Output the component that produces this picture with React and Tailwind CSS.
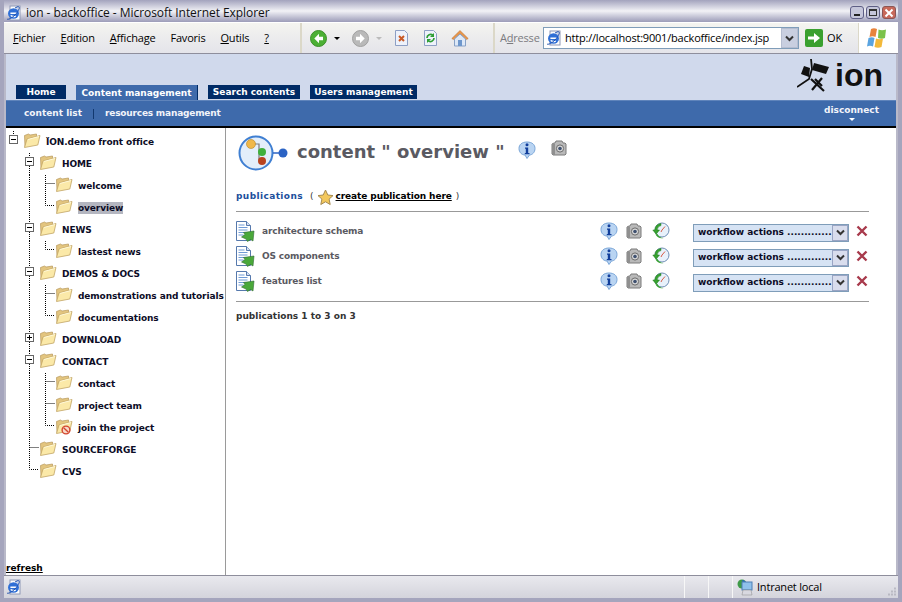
import React from "react";

const VERDANA = "font-['DejaVu_Sans',sans-serif]";
const TAHOMA = "font-['Open_Sans','Liberation_Sans',sans-serif]";

function IeIcon({ size = 16 }) {
  return (
    <svg width={size} height={size} viewBox="0 0 16 16" className="shrink-0">
      <rect x="4" y="1" width="10" height="14" fill="#fdfdfd" stroke="#8d97b5" />
      <path d="M10 1l4 4h-4z" fill="#cfd6ea" />
      <ellipse cx="7.5" cy="8.500" rx="5.500" ry="5.200" fill="#2f6fd6" />
      <path d="M4.400 8.200h6.200M4.800 10.400c1 1.400 3.600 1.400 4.800.4" stroke="#fff" strokeWidth="1.500" fill="none" />
      <path d="M1 14c1 1 5-1 8-4s5-7 4-8-3 .5-4 1" stroke="#1d4fae" strokeWidth="1" fill="none" />
    </svg>
  );
}

function RoundArrow({ color, edge, flip }) {
  return (
    <svg width="17" height="17" viewBox="0 0 17 17" className={flip ? "-scale-x-100" : ""}>
      <circle cx="8.5" cy="8.5" r="8" fill={color} stroke={edge} />
      <path d="M9 3.8L4.3 8.5 9 13.2V10.3h4V6.7H9z" fill="#fff" />
    </svg>
  );
}

function Folder({ badge }) {
  return (
    <svg width="18" height="18" viewBox="0 0 18 18" className="shrink-0">
      <path d="M1.500 4.500l4-1.500 1.500 1 6.500-1v3L2 16z" fill="#e3c57f" stroke="#b8985a" strokeWidth=".7" />
      <path d="M1.500 16.500L4 8 17 4.500l-2.200 9.500z" fill="#fbe9a8" stroke="#c2a465" strokeWidth=".8" />
      <path d="M4.800 8.500l11.200-3" stroke="#fff8d8" />
      {badge && (
        <g>
          <circle cx="11" cy="13" r="3.900" fill="#f7d9c9" stroke="#d2452e" strokeWidth="1.400" />
          <path d="M8.600 10.800l4.800 4.400" stroke="#d2452e" strokeWidth="1.300" />
        </g>
      )}
    </svg>
  );
}

function InfoIcon() {
  return (
    <svg width="18" height="18" viewBox="0 0 18 18" className="shrink-0">
      <path d="M9 1c5 0 8 2.500 8 6.500S14 14 11.500 14L9 17.500 7 14C4 14 1 11.500 1 7.500S4 1 9 1z" fill="#b9d4f2" stroke="#7aa6d8" />
      <circle cx="9" cy="3.800" r="1.500" fill="#123f9c" />
      <path d="M7 6.500h3.200v5.500H11.500v1.300H6.800V12h1V7.800H7z" fill="#123f9c" />
    </svg>
  );
}

function CameraIcon() {
  return (
    <svg width="18" height="18" viewBox="0 0 18 18" className="shrink-0">
      <path d="M2 5l2-1h1l1-2h6l1 2h2l1 1v10l-1 1H3l-1-1z" fill="#b9b9b9" stroke="#7b7b7b" />
      <path d="M2 5h3v11H3l-1-1z" fill="#8f8f8f" />
      <circle cx="10" cy="9.500" r="3.600" fill="#d8d8d8" stroke="#6d6d6d" />
      <circle cx="10" cy="9.500" r="1.800" fill="#3f5170" />
    </svg>
  );
}

function ClockIcon() {
  return (
    <svg width="18" height="18" viewBox="0 0 18 18" className="shrink-0">
      <circle cx="10" cy="8" r="7" fill="#e8f1fb" stroke="#6f8fb5" />
      <path d="M10 8l3-3.500M10 8l-1 2" stroke="#d75b45" strokeWidth="1" />
      <path d="M9 1.500A7 7 0 0 0 2.800 8H.8l3.300 4.200L7.500 8H5.200A4.800 4.800 0 0 1 9 3.500z" fill="#37a12f" stroke="#1f7a1d" strokeWidth=".5" />
      <path d="M3.500 12.500c1.500 3 5 4.500 8 3.500-3-.2-5-1.500-6-4z" fill="#37a12f" />
    </svg>
  );
}

function DocIcon() {
  return (
    <svg width="19" height="21" viewBox="0 0 19 21" className="shrink-0">
      <path d="M.5.500h10l4 4v15H.5z" fill="#fff" stroke="#5679ad" />
      <path d="M10.500.500v4h4" fill="#d5e0f1" stroke="#5679ad" />
      <path d="M2.500 4h6M2.500 6.500h9M2.500 9h9M2.500 11.500h9M2.500 14h5" stroke="#6f9ad6" />
      <path d="M5.500 16l3.500-2.500-1.500-2 10.500-1.500-1 10-2.500-1.500-3 2-1.500-2.500z" fill="#4aa83a" stroke="#2f6a34" strokeWidth=".6" />
    </svg>
  );
}

function Toggle({ plus }) {
  return (
    <g>
      <rect x=".5" y=".5" width="8" height="8" fill="#fff" stroke="#666" />
      <path d="M2 4.500h5" stroke="#000" />
      {plus && <path d="M4.500 2v5" stroke="#000" />}
    </g>
  );
}

// dotted lines and +/- box in front of a tree row, one svg per row
function Guides({ level, toggle, plus, lastBranch, lastChild }) {
  const dot = { stroke: "#000", strokeDasharray: "1 1", fill: "none" };
  if (level === 0) {
    return (
      <svg width="23" height="22" viewBox="0 0 23 22" className="shrink-0">
        <path d="M13.500 0v3" {...dot} />
        <g transform="translate(9 4)"><Toggle /></g>
      </svg>
    );
  }
  if (level === 1) {
    return (
      <svg width="39" height="22" viewBox="0 0 39 22" className="shrink-0">
        {toggle ? (
          <g>
            <path d="M29.500 0v4M29.500 13v9" {...dot} />
            <g transform="translate(25 4)"><Toggle plus={plus} /></g>
          </g>
        ) : (
          <path d={lastBranch ? "M29.500 0v8.500h9" : "M29.500 0v22M29.500 8.500h9"} {...dot} />
        )}
      </svg>
    );
  }
  return (
    <svg width="55" height="22" viewBox="0 0 55 22" className="shrink-0">
      <path d="M29.500 0v22" {...dot} />
      <path d={lastChild ? "M45.500 0v8.500h9" : "M45.500 0v22M45.500 8.500h9"} {...dot} />
    </svg>
  );
}

const TREE = [
  { label: "ÏON.demo front office", level: 0 },
  { label: "HOME", level: 1, toggle: true },
  { label: "welcome", level: 2 },
  { label: "overview", level: 2, lastChild: true, selected: true },
  { label: "NEWS", level: 1, toggle: true },
  { label: "lastest news", level: 2, lastChild: true },
  { label: "DEMOS & DOCS", level: 1, toggle: true },
  { label: "demonstrations and tutorials", level: 2 },
  { label: "documentations", level: 2, lastChild: true },
  { label: "DOWNLOAD", level: 1, toggle: true, plus: true },
  { label: "CONTACT", level: 1, toggle: true },
  { label: "contact", level: 2 },
  { label: "project team", level: 2 },
  { label: "join the project", level: 2, lastChild: true, badge: true },
  { label: "SOURCEFORGE", level: 1 },
  { label: "CVS", level: 1, lastBranch: true },
];

function TreeRow({ item }) {
  return (
    <div className="flex h-[22px] items-start">
      <Guides {...item} />
      <Folder badge={item.badge} />
      <span className={`mt-[5px] ml-[5px] h-[12px] text-[9px] leading-[12px] font-bold tracking-[-0.1px] whitespace-nowrap text-[#0c0c26] ${item.selected ? "bg-[#b4b6c0]" : ""}`}>
        {item.label}
      </span>
    </div>
  );
}

const PUBLICATIONS = ["architecture schema", "OS components", "features list"];

function PublicationRow({ name }) {
  return (
    <div className="flex h-[25px] items-center">
      <DocIcon />
      <span className="mt-[1px] ml-[7px] w-[338px] shrink-0 text-[9px] font-bold tracking-[-0.15px] text-[#5a5a62]">{name}</span>
      <div className="mt-[-1px] flex w-[70px] shrink-0 items-center">
        <InfoIcon />
        <span className="ml-[7px]"><CameraIcon /></span>
        <span className="ml-[9px]"><ClockIcon /></span>
      </div>
      <div className="mt-[2px] ml-[23px] flex h-[18px] w-[156px] shrink-0 items-center border border-[#7f9db9] bg-[#d6e3f4]">
        <span className="flex-1 overflow-hidden pl-[4px] text-[9px] font-bold whitespace-nowrap text-[#0c0c26]">workflow actions .............</span>
        <span className="flex h-[16px] w-[16px] shrink-0 items-center justify-center border border-[#9aa5c4] bg-[#d9dded]">
          <svg width="9" height="7" viewBox="0 0 9 7"><path d="M1 1.500l3.500 3.500L8 1.500" stroke="#333" strokeWidth="2" fill="none" /></svg>
        </span>
      </div>
      <svg width="12" height="12" viewBox="0 0 12 12" className="mt-[-1px] ml-[7px] shrink-0">
        <path d="M1.500 1.500l9 9M10.500 1.500l-9 9" stroke="#a83a4c" strokeWidth="2.400" />
      </svg>
    </div>
  );
}

function Menu({ u, rest }) {
  return (
    <span className="text-[11px] tracking-[-0.2px] text-black">
      <span className="underline">{u}</span>{rest}
    </span>
  );
}

export default function App() {
  return (
    <div className={`flex h-[602px] w-[902px] flex-col overflow-hidden border-x-[4px] border-b-[4px] border-[#a5a5bd] bg-[#a5a5bd] ${TAHOMA}`}>
      {/* title bar */}
      <div className="-mx-[4px] flex h-[22px] shrink-0 items-center bg-gradient-to-b from-[#a3a3bd] via-[#f2f2f6] to-[#9c9cb8] pt-[3px] pr-[6px] pl-[6px]">
        <IeIcon />
        <span className="ml-[4px] text-[12px] tracking-[-0.05px] text-[#111]">ion - backoffice - Microsoft Internet Explorer</span>
        <div className="ml-auto flex gap-[2px]">
          <span className="flex h-[13px] w-[14px] items-end justify-center rounded-[3px] border border-[#5e5e85] bg-[#c5c6da] pb-[2px]"><span className="h-[2px] w-[6px] bg-[#222]" /></span>
          <span className="flex h-[13px] w-[14px] items-center justify-center rounded-[3px] border border-[#5e5e85] bg-[#c5c6da]"><span className="h-[7px] w-[8px] border border-t-2 border-[#333]" /></span>
          <span className="flex h-[13px] w-[14px] items-center justify-center rounded-[3px] border border-[#8a5555] bg-[#c8695a]">
            <svg width="10" height="10" viewBox="0 0 10 10"><path d="M1.500 1.500l7 7M8.500 1.500l-7 7" stroke="#fff" strokeWidth="2" /></svg>
          </span>
        </div>
      </div>

      {/* toolbar */}
      <div className="flex h-[32px] shrink-0 items-center border-t border-b border-t-white border-b-[#8e8e9c] bg-gradient-to-b from-[#f4f4f0] to-[#e4e4ea]">
        <div className="flex h-full w-[298px] shrink-0 items-center gap-[15px] border-r-2 border-[#dbd8c8] pl-[9px]">
          <Menu u="F" rest="ichier" />
          <Menu u="E" rest="dition" />
          <Menu u="A" rest="ffichage" />
          <Menu u="" rest="Favoris" />
          <Menu u="O" rest="utils" />
          <Menu u="?" rest="" />
        </div>
        <div className="flex h-full w-[193px] shrink-0 items-center border-r-2 border-[#dbd8c8] pl-[8px]">
          <RoundArrow color="#4cb034" edge="#3d8f2b" />
          <span className="ml-[7px] border-x-[3px] border-t-[3px] border-x-transparent border-t-black" />
          <span className="ml-[12px]"><RoundArrow color="#b9b9b9" edge="#a0a0a0" flip /></span>
          <span className="ml-[7px] border-x-[3px] border-t-[3px] border-x-transparent border-t-[#bbb]" />
          <svg width="15" height="16" viewBox="0 0 15 16" className="ml-[12px]">
            <path d="M1.500.500h9l3 3v12h-12z" fill="#eef2fb" stroke="#8d9fc4" />
            <path d="M5 6l5 5M10 6l-5 5" stroke="#c95a26" strokeWidth="2" />
          </svg>
          <svg width="15" height="16" viewBox="0 0 15 16" className="ml-[14px]">
            <path d="M1.500.500h9l3 3v12h-12z" fill="#eef2fb" stroke="#8d9fc4" />
            <path d="M4 8a3.500 3.500 0 0 1 6-2.500M11 8a3.500 3.500 0 0 1-6 2.500" stroke="#2e9e35" strokeWidth="1.700" fill="none" />
            <path d="M11 3v4H7zM4 13V9h4z" fill="#2e9e35" />
          </svg>
          <svg width="18" height="18" viewBox="0 0 18 18" className="ml-[13px]">
            <path d="M9 1.500L.8 9.500l1.600 1L9 4.500l6.600 6 1.600-1z" fill="#e8964a" stroke="#b96d2d" strokeWidth=".5" />
            <path d="M3.500 10L9 5l5.500 5v7h-11z" fill="#dde8f7" stroke="#87a1c6" />
            <rect x="7" y="11" width="4" height="6" fill="#6e97cc" />
          </svg>
        </div>
        <div className="flex h-full flex-1 items-center pl-[5px]">
          <span className="w-[38px] text-[11px] tracking-[-0.2px] text-[#7b7b80]">A<span className="underline">d</span>resse</span>
          <div className="ml-[5px] flex h-[22px] w-[256px] shrink-0 items-center border border-[#7f9db9] bg-white pl-[2px]">
            <IeIcon />
            <span className="ml-[3px] flex-1 text-[11px] tracking-[-0.2px] whitespace-nowrap text-black">http://localhost:9001/backoffice/index.jsp</span>
            <span className="flex h-[20px] w-[17px] shrink-0 items-center justify-center border border-[#b5bdd0] bg-[#c9cfe0]">
              <svg width="9" height="7" viewBox="0 0 9 7"><path d="M1 1.500l3.500 3.500L8 1.500" stroke="#333" strokeWidth="2" fill="none" /></svg>
            </span>
          </div>
          <span className="ml-[6px] flex h-[18px] w-[18px] shrink-0 items-center justify-center rounded-[2px] bg-[#3aa02f]">
            <svg width="14" height="14" viewBox="0 0 14 14"><path d="M1 5.500h6V2l6 5-6 5V8.500H1z" fill="#fff" /></svg>
          </span>
          <span className="ml-[4px] text-[11px] text-black">OK</span>
        </div>
        <div className="flex h-full w-[40px] shrink-0 items-center justify-center border-l border-[#dbd8c8] bg-white">
          <svg width="25" height="23" viewBox="0 0 25 23">
            <path d="M5 2c2-1 4-1 6 0l-1.500 8c-2-1-4-1-6 0z" fill="#e8843c" />
            <path d="M12.500 2.500c2 1 5 1 7.500 0L19 11c-2 1-5 1-7 0z" fill="#7cc24a" />
            <path d="M2.500 11c2-1 4-1 6 0L7 19.500c-2-1-4-1-6 0z" fill="#5aa4e0" />
            <path d="M10 11.500c2 1 5 1 7 0L15.500 20c-2 1-5 1-7 0z" fill="#f3b93a" />
          </svg>
        </div>
      </div>

      {/* page */}
      <div className={`flex min-h-0 flex-1 flex-col border-x-2 border-[#b9b9c9] bg-white ${VERDANA}`}>
        <div className="flex h-[46px] shrink-0 items-end justify-between bg-[#d0d9ec] pl-[10px]">
          <div className="flex items-end text-[9px] font-bold whitespace-nowrap text-white">
            <span className="mb-[1px] flex h-[14px] w-[50px] items-center justify-center bg-[#002b66] pt-[2px]">Home</span>
            <span className="ml-[10px] flex h-[15px] w-[122px] items-center justify-center border-r border-[#002b66] bg-[#3e6aab] pt-[2px]">Content management</span>
            <span className="mb-[1px] ml-[10px] flex h-[14px] w-[92px] items-center justify-center bg-[#002b66] pt-[2px]">Search contents</span>
            <span className="mb-[1px] ml-[10px] flex h-[14px] w-[107px] items-center justify-center bg-[#002b66] pt-[2px]">Users management</span>
          </div>
          <div className="flex h-full items-center pr-[13px] pb-[4px]">
            <svg width="32" height="33" viewBox="0 0 32 33" className="mr-[6px]">
              <path d="M17 4l15 4-3 7-14-4zM7 7l6 2-1 9-8-3z" fill="#111" />
              <path d="M0 28l12-8 3-10-1-10" stroke="#111" strokeWidth="1.800" fill="none" />
              <path d="M14 20l13 12M25 19L15 31M18 20l7 7" stroke="#111" strokeWidth="2.200" />
            </svg>
            <span className="font-['Liberation_Sans',sans-serif] text-[32px] leading-none font-bold text-[#111]">ion</span>
          </div>
        </div>

        <div className="flex h-[26px] shrink-0 items-center justify-between border-t border-[#5f84bb] bg-[#3e6aab] pr-[17px] pl-[18px] text-[9px] font-bold text-[#f2f4fa]">
          <div className="flex items-center">
            <span>content list</span>
            <span className="mx-[11px] h-[10px] w-px bg-[#12386f]" />
            <span className="tracking-[-0.2px]">resources management</span>
          </div>
          <div className="mb-[2px] flex flex-col items-center">
            <span className="leading-[12px]">disconnect</span>
            <span className="mt-[2px] border-x-[3px] border-t-[3px] border-x-transparent border-t-white" />
          </div>
        </div>

        <div className="h-[2px] shrink-0 bg-black" />

        <div className="flex min-h-0 flex-1">
          {/* left tree */}
          <div className="flex w-[220px] shrink-0 flex-col border-r border-[#9a9a9a]">
            <div className="-ml-[6px] flex-1 pt-[3px]">
              {TREE.map((item) => (
                <TreeRow key={item.label + item.level} item={item} />
              ))}
            </div>
            <span className="mb-[1px] text-[9px] leading-[12px] font-bold text-black underline">refresh</span>
          </div>

          {/* main content */}
          <div className="flex-1 pr-[27px] pl-[10px]">
            <div className="flex h-[46px] items-center">
              <svg width="50" height="38" viewBox="0 0 50 38" className="mt-[4px] ml-[2px] shrink-0">
                <circle cx="18" cy="19" r="16.500" fill="#e3eefa" stroke="#3f7fd2" strokeWidth="2" />
                <path d="M13 10h8v16h5M21 19h5" stroke="#7a7a7a" strokeWidth="1.200" fill="none" />
                <circle cx="13" cy="10" r="4.500" fill="#f0b84a" stroke="#b98325" strokeWidth=".6" />
                <circle cx="24" cy="18" r="4" fill="#3fb03c" />
                <circle cx="24" cy="27" r="4" fill="#b8431f" />
                <path d="M35 19h8" stroke="#2b63c4" strokeWidth="1.500" />
                <circle cx="45" cy="19" r="4.500" fill="#2b63c4" />
              </svg>
              <span className="mt-[2px] ml-[9px] text-[18px] leading-none font-bold whitespace-nowrap text-[#5a5a62]">content " overview "</span>
              <span className="-mt-[2px] ml-[13px]"><InfoIcon /></span>
              <span className="-mt-[6px] ml-[14px]"><CameraIcon /></span>
            </div>

            <div className="mt-[14px] flex h-[18px] items-center text-[9px] font-bold">
              <span className="tracking-[0.4px] text-[#1c4f9c]">publications</span>
              <span className="ml-[7px] font-normal text-[#333]">(</span>
              <svg width="17" height="17" viewBox="0 0 17 17" className="ml-[3px]">
                <path d="M8.500 1l2.300 5 5.200.6-3.900 3.500 1.100 5.400-4.700-2.700-4.700 2.700 1.100-5.400L1 6.600 6.200 6z" fill="#f2c75c" stroke="#a58a52" />
              </svg>
              <span className="ml-[2px] tracking-[-0.1px] text-black underline">create publication here</span>
              <span className="ml-[4px] font-normal text-[#333]">)</span>
            </div>

            <div className="mt-[5px] h-px bg-[#999]" />

            <div className="pt-[7px]">
              {PUBLICATIONS.map((name) => (
                <PublicationRow key={name} name={name} />
              ))}
            </div>

            <div className="mt-[7px] h-px bg-[#999]" />
            <p className="mt-[8px] text-[9px] leading-[12px] font-bold text-[#333]">publications 1 to 3 on 3</p>
          </div>
        </div>
      </div>

      {/* status bar */}
      <div className="flex h-[23px] shrink-0 items-center border-t border-[#8e8e9c] bg-gradient-to-b from-[#e9e9ee] to-[#d4d4dc]">
        <span className="ml-[2px]"><IeIcon /></span>
        <div className="ml-auto flex h-full items-center">
          <span className="h-full w-[24px] border-l border-[#f7f7f7]" />
          <span className="h-full w-[24px] border-l border-[#f7f7f7]" />
          <span className="flex h-full w-[166px] items-center border-l border-[#f7f7f7] pl-[4px]">
            <svg width="16" height="17" viewBox="0 0 16 17" className="shrink-0">
              <ellipse cx="5" cy="5" rx="4.500" ry="4.500" fill="#3f9a49" />
              <path d="M5 1a4.500 4.500 0 0 1 0 9c2-2 2-6 0-9z" fill="#2c66c4" />
              <rect x="5" y="3" width="10" height="8" fill="#8fc1ec" stroke="#4d7fb5" />
              <path d="M6 11h8l1 5H5z" fill="#d8d8e0" stroke="#888" strokeWidth=".5" />
            </svg>
            <span className="ml-[4px] text-[11px] tracking-[-0.2px] text-black">Intranet local</span>
            <svg width="10" height="10" viewBox="0 0 10 10" className="mt-[10px] mr-[1px] ml-auto">
              <path d="M7.500 1.500h1M4.500 4.500h1M7.500 4.500h1M1.500 7.500h1M4.500 7.500h1M7.500 7.500h1" stroke="#9a9aa6" strokeWidth="2" />
            </svg>
          </span>
        </div>
      </div>
    </div>
  );
}
